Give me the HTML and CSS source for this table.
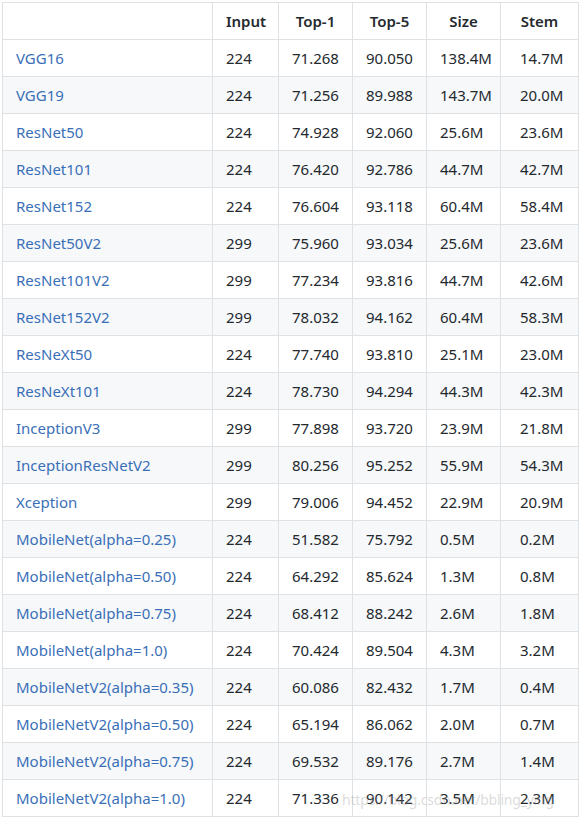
FILE: index.html
```html
<!DOCTYPE html>
<html>
<head>
<meta charset="utf-8">
<link rel="stylesheet" href="styles.css">
</head>
<body>
<div class="wrap">
<table class="models">
<colgroup>
<col class="c-name"><col class="c-in"><col class="c-num"><col class="c-num"><col class="c-num"><col class="c-stem">
</colgroup>
<thead>
<tr><th></th><th>Input</th><th>Top-1</th><th>Top-5</th><th>Size</th><th>Stem</th></tr>
</thead>
<tbody>
<tr><td><a>VGG16</a></td><td>224</td><td>71.268</td><td>90.050</td><td>138.4M</td><td>14.7M</td></tr>
<tr><td><a>VGG19</a></td><td>224</td><td>71.256</td><td>89.988</td><td>143.7M</td><td>20.0M</td></tr>
<tr><td><a>ResNet50</a></td><td>224</td><td>74.928</td><td>92.060</td><td>25.6M</td><td>23.6M</td></tr>
<tr><td><a>ResNet101</a></td><td>224</td><td>76.420</td><td>92.786</td><td>44.7M</td><td>42.7M</td></tr>
<tr><td><a>ResNet152</a></td><td>224</td><td>76.604</td><td>93.118</td><td>60.4M</td><td>58.4M</td></tr>
<tr><td><a>ResNet50V2</a></td><td>299</td><td>75.960</td><td>93.034</td><td>25.6M</td><td>23.6M</td></tr>
<tr><td><a>ResNet101V2</a></td><td>299</td><td>77.234</td><td>93.816</td><td>44.7M</td><td>42.6M</td></tr>
<tr><td><a>ResNet152V2</a></td><td>299</td><td>78.032</td><td>94.162</td><td>60.4M</td><td>58.3M</td></tr>
<tr><td><a>ResNeXt50</a></td><td>224</td><td>77.740</td><td>93.810</td><td>25.1M</td><td>23.0M</td></tr>
<tr><td><a>ResNeXt101</a></td><td>224</td><td>78.730</td><td>94.294</td><td>44.3M</td><td>42.3M</td></tr>
<tr><td><a>InceptionV3</a></td><td>299</td><td>77.898</td><td>93.720</td><td>23.9M</td><td>21.8M</td></tr>
<tr><td><a>InceptionResNetV2</a></td><td>299</td><td>80.256</td><td>95.252</td><td>55.9M</td><td>54.3M</td></tr>
<tr><td><a>Xception</a></td><td>299</td><td>79.006</td><td>94.452</td><td>22.9M</td><td>20.9M</td></tr>
<tr><td><a>MobileNet(alpha=0.25)</a></td><td>224</td><td>51.582</td><td>75.792</td><td>0.5M</td><td>0.2M</td></tr>
<tr><td><a>MobileNet(alpha=0.50)</a></td><td>224</td><td>64.292</td><td>85.624</td><td>1.3M</td><td>0.8M</td></tr>
<tr><td><a>MobileNet(alpha=0.75)</a></td><td>224</td><td>68.412</td><td>88.242</td><td>2.6M</td><td>1.8M</td></tr>
<tr><td><a>MobileNet(alpha=1.0)</a></td><td>224</td><td>70.424</td><td>89.504</td><td>4.3M</td><td>3.2M</td></tr>
<tr><td><a>MobileNetV2(alpha=0.35)</a></td><td>224</td><td>60.086</td><td>82.432</td><td>1.7M</td><td>0.4M</td></tr>
<tr><td><a>MobileNetV2(alpha=0.50)</a></td><td>224</td><td>65.194</td><td>86.062</td><td>2.0M</td><td>0.7M</td></tr>
<tr><td><a>MobileNetV2(alpha=0.75)</a></td><td>224</td><td>69.532</td><td>89.176</td><td>2.7M</td><td>1.4M</td></tr>
<tr><td><a>MobileNetV2(alpha=1.0)</a></td><td>224</td><td>71.336</td><td>90.142</td><td>3.5M</td><td>2.3M</td></tr>
</tbody>
</table>
<div class="watermark">https://blog.csdn.net/bbling_ying</div>
</div>
</body>
</html>
```
FILE: styles.css
```css
html, body {
  margin: 0;
  padding: 0;
  background: #ffffff;
}
body {
  padding: 2px 0 0 2px;
  font-family: "Noto Sans", "Open Sans", sans-serif;
  font-size: 15px;
  color: #24292e;
}
.wrap {
  position: relative;
  width: 576px;
}
.models {
  border-collapse: collapse;
  table-layout: fixed;
  width: 576px;
}
.c-name { width: 210px; }
.c-in { width: 66px; }
.c-num { width: 74px; }
.c-stem { width: 78px; }
.models th,
.models td {
  border: 1px solid #dfe2e5;
  padding: 6px 13px;
  line-height: 24px;
  white-space: nowrap;
  overflow: hidden;
}
.models th {
  font-weight: 600;
  text-align: center;
}
.models td {
  text-align: left;
}
.models td:last-child {
  padding-left: 19px;
}
.models tbody tr:nth-child(2n) {
  background: #f6f8fa;
}
.models a {
  color: #3a6fb8;
  text-decoration: none;
}
.watermark {
  position: absolute;
  left: 340px;
  top: 786px;
  width: 232px;
  font-size: 14px;
  line-height: 24px;
  letter-spacing: -0.2px;
  color: rgba(150, 150, 150, 0.35);
  white-space: nowrap;
  overflow: hidden;
  pointer-events: none;
}
```
